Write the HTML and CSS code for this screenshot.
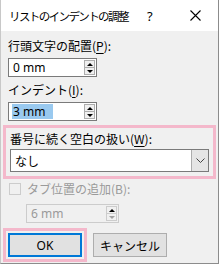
FILE: index.html
```html
<!DOCTYPE html>
<html>
  <head>
    <link rel="stylesheet" href="styles.css">
  </head>
  <body>
    <div class="dialog">
      <div class="title-bar">
        <span class="title">リストのインデントの調整</span>
        <span class="help">?</span>
        <span class="close">
          <svg width="11" height="11" viewBox="0 0 11 11">
            <path d="M0.5 0.5 L10.5 10.5 M10.5 0.5 L0.5 10.5" stroke="#000" stroke-width="1.1" fill="none"/>
          </svg>
        </span>
      </div>
      <div class="content">
        <div class="field">
          <div class="label">行頭文字の配置(<u>P</u>):</div>
          <div class="spin-box">
            <span class="value">0 mm</span>
            <div class="spinner">
              <span class="spin up"></span>
              <span class="spin down"></span>
            </div>
          </div>
        </div>
        <div class="field">
          <div class="label">インデント(<u>I</u>):</div>
          <div class="spin-box">
            <span class="value"><span class="selected">3 mm</span></span>
            <div class="spinner">
              <span class="spin up"></span>
              <span class="spin down"></span>
            </div>
          </div>
        </div>
        <div class="highlight wide">
          <div class="label">番号に続く空白の扱い(<u>W</u>):</div>
          <div class="select">
            <span class="value">なし</span>
            <span class="drop">
              <svg width="9" height="5" viewBox="0 0 9 5">
                <path d="M0.5 0.5 L4.5 4.5 L8.5 0.5" stroke="#444" stroke-width="1" fill="none"/>
              </svg>
            </span>
          </div>
        </div>
        <div class="check-row">
          <span class="checkbox"></span>
          <span class="label disabled">タブ位置の追加(B):</span>
        </div>
        <div class="spin-box indent disabled">
          <span class="value">6 mm</span>
          <div class="spinner">
            <span class="spin up"></span>
            <span class="spin down"></span>
          </div>
        </div>
        <div class="buttons">
          <div class="highlight ok-wrap">
            <button class="btn ok">OK</button>
          </div>
          <button class="btn cancel">キャンセル</button>
        </div>
      </div>
    </div>
  </body>
</html>
```

FILE: styles.css
```css
* {
  box-sizing: border-box;
}
body {
  margin: 0;
  background: #fff;
  font-family: "Noto Sans CJK JP", "Noto Sans", sans-serif;
  font-size: 12px;
  color: #000;
}
.dialog {
  width: 219px;
  height: 264px;
  border: 1px solid #8c8c8c;
  border-top: none;
  border-left-color: #c8c8c8;
  display: flex;
  flex-direction: column;
}
.title-bar {
  height: 31px;
  background: #fff;
  display: flex;
  align-items: center;
  padding-left: 8px;
}
.title {
  font-size: 11.5px;
  letter-spacing: -1.6px;
  white-space: nowrap;
  flex: 1;
}
.help {
  width: 43px;
  font-size: 13px;
  font-family: "Noto Sans", sans-serif;
}
.close {
  width: 24px;
  display: flex;
  margin-right: 4px;
}
.content {
  flex: 1;
  background: #f0f0f0;
  padding: 6px 0 0 0;
}
.field {
  padding: 0 7px;
  margin-bottom: 4px;
}
.label {
  line-height: 17px;
  height: 18px;
  white-space: nowrap;
}
.label u {
  text-decoration-thickness: 1px;
  text-underline-offset: 2px;
}
.spin-box {
  width: 89px;
  height: 19px;
  margin-top: 3px;
  border: 1px solid #7a7a7a;
  background: #fff;
  display: flex;
  align-items: center;
  padding: 0 1px 0 4px;
  font-family: "Noto Sans", sans-serif;
}
.spin-box .value {
  flex: 1;
  font-size: 12px;
  line-height: 15px;
}
.selected {
  background: #99c9ef;
  padding: 0 1px 0 1px;
  margin-left: -1px;
  display: inline-block;
  width: 41px;
}
.spinner {
  width: 11px;
  height: 15px;
  display: flex;
  flex-direction: column;
  border: 1px solid #adadad;
  background: #f0f0f0;
}
.spin {
  flex: 1;
  display: flex;
  align-items: center;
  justify-content: center;
}
.spin.up {
  border-bottom: 1px solid #adadad;
}
.spin.up::before {
  content: "";
  border-left: 3px solid transparent;
  border-right: 3px solid transparent;
  border-bottom: 3px solid #000;
}
.spin.down::before {
  content: "";
  border-left: 3px solid transparent;
  border-right: 3px solid transparent;
  border-top: 3px solid #000;
}
.highlight {
  border: 3px solid #f4b8cb;
}
.wide {
  margin: 4px 2px 0 2px;
  padding: 2px 4px 4px 4px;
}
.select {
  margin-top: 1px;
  height: 23px;
  border: 1px solid #7a7a7a;
  background: #fff;
  display: flex;
  align-items: center;
  padding-left: 4px;
}
.select .value {
  flex: 1;
}
.drop {
  width: 17px;
  height: 100%;
  background: #e5e5e5;
  border-left: 1px solid #adadad;
  display: flex;
  align-items: center;
  justify-content: center;
}
.check-row {
  display: flex;
  align-items: center;
  padding: 0 7px 0 8px;
  margin-top: 1px;
  gap: 6px;
}
.checkbox {
  width: 12px;
  height: 12px;
  border: 1px solid #cccccc;
  background: #f0f0f0;
}
.disabled {
  color: #9a9a9a;
}
.spin-box.indent {
  margin-top: 6px;
  margin-left: 25px;
  width: 93px;
  border-color: #cccccc;
  background: #f0f0f0;
}
.spin-box.disabled .spinner {
  border-color: #cccccc;
}
.spin-box.disabled .spin.up {
  border-bottom-color: #cccccc;
}
.spin-box.disabled .spin.down::before {
  border-top-color: #a0a0a0;
}
.buttons {
  display: flex;
  align-items: center;
  margin-top: 5px;
  padding-left: 2px;
  gap: 6px;
}
.ok-wrap {
  padding: 2px;
}
.btn {
  width: 74px;
  height: 24px;
  background: #e1e1e1;
  border: 1px solid #adadad;
  font-family: "Noto Sans CJK JP", "Noto Sans", sans-serif;
  font-size: 12px;
  padding: 0;
  color: #000;
}
.btn.ok {
  border: 2px solid #0078d7;
  font-family: "Noto Sans", sans-serif;
}
```
